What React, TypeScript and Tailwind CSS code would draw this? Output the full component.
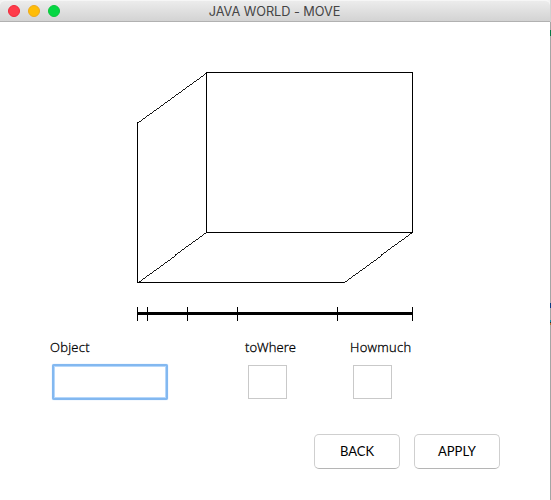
const ticks = [0, 10, 50, 100, 200, 275];

function TitleBar() {
  return (
    <header className="relative flex h-[22px] shrink-0 items-center justify-center rounded-t-[5px] border-t border-b border-t-[#f6f6f6] border-b-[#b1b1b1] bg-linear-to-b from-[#ececec] to-[#d3d3d3]">
      <div className="absolute top-1 left-2 flex gap-2">
        <span className="size-3 rounded-full border border-[#f0293a] bg-[#ff3b4a]" />
        <span className="size-3 rounded-full border border-[#eda91b] bg-[#ffbd07]" />
        <span className="size-3 rounded-full border border-[#0bc53c] bg-[#05d743]" />
      </div>
      <h1 className="mr-px pt-px font-['Inter',sans-serif] text-[12.75px] leading-5 tracking-[-0.05px] whitespace-nowrap text-[#454545]">JAVA WORLD - MOVE</h1>
    </header>
  );
}

function Room() {
  return (
    <svg className="mt-[50px] ml-[137px] block shrink-0" width="276" height="249" viewBox="0 0 276 249" shapeRendering="crispEdges" fill="none" stroke="#000">
      <path d="M69.5 .5H275.5V160.5H69.5ZM.5 50V210.5H206.5" />
      <path d="M69.5 .5L.5 50.5M206.5 210.5L275.5 160.5M69.5 160.5L.5 210.5" strokeWidth="0.92" />
      <path d="M0 241.5H276" strokeWidth="3" />
      {ticks.map((x) => (
        <path key={x} d={`M${x + 0.5} 235V249`} />
      ))}
    </svg>
  );
}

export default function App() {
  return (
    <div className="flex h-[500px] w-[551px] overflow-hidden bg-[#f3f3f3] text-black">
      <main className="flex min-w-0 flex-1 flex-col rounded-t-[5px] bg-white">
        <TitleBar />
        <Room />
        <div className="mt-[18px] ml-[50px] flex font-['Open_Sans','Noto_Sans',sans-serif] text-[13px] leading-4 font-light [-webkit-text-stroke:0.3px_black]">
          <label className="w-[195px]" htmlFor="object"><span className="tracking-[0.25px]">Object</span></label>
          <label className="w-[105px]" htmlFor="where"><span className="tracking-[0.05px]">toWhere</span></label>
          <label htmlFor="amount"><span className="tracking-[0.3px]">Howmuch</span></label>
        </div>
        <div className="mt-[9px] ml-[52px] flex h-9 items-center">
          <input id="object" className="h-9 w-[116px] rounded-[2px] border-2 border-[#83b8f0] bg-white px-1 shadow-[inset_0_0_0_1px_#b5d7fb,0_0_1px_#8fc4fa] outline-none" />
          <input id="where" className="ml-20 h-[34px] w-[39px] border border-[#c9c9c9] bg-white px-1" />
          <input id="amount" className="ml-[66px] h-[34px] w-[39px] border border-[#c9c9c9] bg-white px-1" />
        </div>
        <div className="mt-[34px] ml-[314px] flex gap-[14px] font-['Lato',sans-serif] text-[13px]">
          <button className="h-[35px] w-[86px] rounded-[5px] border border-[#cfcfcf] border-b-[#b5b5b5] bg-white">BACK</button>
          <button className="h-[35px] w-[86px] rounded-[5px] border border-[#cfcfcf] border-b-[#b5b5b5] bg-white">APPLY</button>
        </div>
      </main>
      <aside className="flex w-px flex-col bg-[#a5a5a5]">
        <span className="h-[22px] bg-[#d0d0d0]" />
        <span className="mt-2 h-[6px] bg-[#087846]" />
        <span className="mt-[267px] h-[5px] bg-[#083a83]" />
        <span className="mt-3 h-[2px] bg-[#168fa8]" />
        <span className="h-[1px] bg-[#253039]" />
        <span className="h-[2px] bg-[#ad6e31]" />
      </aside>
    </div>
  );
}
